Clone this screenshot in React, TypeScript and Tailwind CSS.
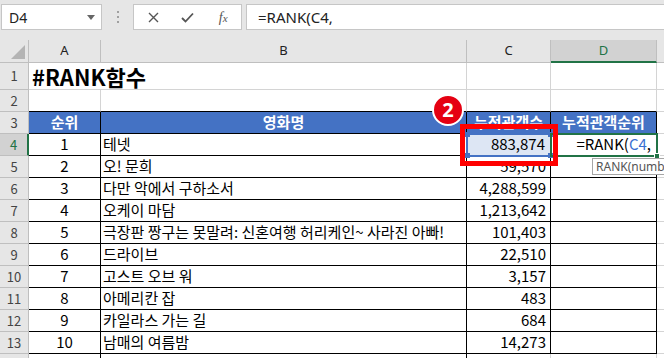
import React from "react"

const KR = "font-['Noto_Sans_CJK_KR','Noto_Sans',sans-serif]"

const movies: [number, string, string][] = [
  [1, "테넷", "883,874"],
  [2, "오! 문희", "59,570"],
  [3, "다만 악에서 구하소서", "4,288,599"],
  [4, "오케이 마담", "1,213,642"],
  [5, "극장판 짱구는 못말려: 신혼여행 허리케인~ 사라진 아빠!", "101,403"],
  [6, "드라이브", "22,510"],
  [7, "고스트 오브 워", "3,157"],
  [8, "아메리칸 잡", "483"],
  [9, "카일라스 가는 길", "684"],
  [10, "남매의 여름밤", "14,273"],
]

function RowHead({ n, active }: { n: string; active?: boolean }) {
  return (
    <div
      className={
        active
          ? "flex items-center justify-center border-b border-b-[#bfbfbf] border-r-2 border-r-[#217346] bg-[#d2d2d2] text-[13px] text-[#217346]"
          : "flex items-center justify-center border-b border-r border-[#bfbfbf] bg-[#e6e6e6] text-[13px] text-[#444]"
      }
    >
      {n}
    </div>
  )
}

function FormulaBar() {
  return (
    <div className="flex h-[40px] items-start pt-[4px]">
      <div className="ml-[1px] flex h-[26px] w-[101px] items-center justify-between border border-[#c6c6c6] bg-white pl-[7px] pr-[6px]">
        <span className="font-['Noto_Sans',sans-serif] text-[14px] text-[#222]">D4</span>
        <svg width="8" height="5" viewBox="0 0 8 5">
          <path d="M0 0h8L4 5z" fill="#666" />
        </svg>
      </div>
      <div className="flex h-[26px] w-[31px] flex-col items-center justify-center gap-[3px]">
        <span className="h-[2px] w-[2px] bg-[#a0a0a0]" />
        <span className="h-[2px] w-[2px] bg-[#a0a0a0]" />
        <span className="h-[2px] w-[2px] bg-[#a0a0a0]" />
      </div>
      <div className="flex h-[26px] w-[109px] items-center border border-[#c6c6c6] bg-white">
        <div className="flex w-[36px] justify-center pl-[4px]">
          <svg width="11" height="11" viewBox="0 0 11 11">
            <path d="M1 1l9 9M10 1l-9 9" stroke="#555" strokeWidth="1.4" />
          </svg>
        </div>
        <div className="flex w-[36px] justify-center">
          <svg width="13" height="11" viewBox="0 0 13 11">
            <path d="M1 6l3.5 3.5L12 1.5" stroke="#555" strokeWidth="1.8" fill="none" />
          </svg>
        </div>
        <div className="flex w-[36px] justify-center">
          <span className="font-['Liberation_Serif',serif] text-[14px] italic text-[#555]">
            f<span className="text-[11px]">x</span>
          </span>
        </div>
      </div>
      <div className="ml-[4px] flex h-[26px] flex-1 items-center border border-r-0 border-[#c6c6c6] bg-white pl-[11px]">
        <span className="font-['Noto_Sans',sans-serif] text-[15px] text-[#222]">=RANK(C4,</span>
      </div>
    </div>
  )
}

export default function App() {
  const cell = "flex items-center border-b border-r text-[15px] text-black"
  return (
    <div className={`relative h-[358px] w-[664px] overflow-hidden bg-[#e6e6e6] ${KR}`}>
      <FormulaBar />
      <div className="grid grid-cols-[29px_72px_366px_84px_106px_7px] grid-rows-[23px_27px_22px_repeat(11,22px)_4px] bg-white">
        {/* column headers */}
        <div className="flex items-end justify-end border-b border-r border-[#bfbfbf] bg-[#e6e6e6] p-[3px]">
          <svg width="14" height="14" viewBox="0 0 14 14">
            <path d="M14 0v14H0z" fill="#b4b4b4" />
          </svg>
        </div>
        {["A", "B", "C"].map((c) => (
          <div
            key={c}
            className="flex items-center justify-center border-b border-r border-[#bfbfbf] bg-[#e6e6e6] font-['Noto_Sans',sans-serif] text-[13px] text-[#222]"
          >
            {c}
          </div>
        ))}
        <div className="flex items-center justify-center border-b-2 border-r border-b-[#217346] border-r-[#bfbfbf] bg-[#d2d2d2] font-['Noto_Sans',sans-serif] text-[13px] text-[#217346]">
          D
        </div>
        <div className="border-b border-[#bfbfbf] bg-[#e6e6e6]" />

        {/* row 1 */}
        <RowHead n="1" />
        <div className="relative z-10 flex items-center overflow-visible border-b border-[#d4d4d4] pl-[3px]">
          <span className="whitespace-nowrap text-[22px] font-bold leading-none text-black">#RANK함수</span>
        </div>
        <div className="border-b border-r border-[#d4d4d4]" />
        <div className="border-b border-r border-[#d4d4d4]" />
        <div className="border-b border-r border-[#d4d4d4]" />
        <div className="border-b border-[#d4d4d4]" />

        {/* row 2 */}
        <RowHead n="2" />
        <div className="border-b border-r border-b-black border-r-[#d4d4d4]" />
        <div className="border-b border-r border-b-black border-r-[#d4d4d4]" />
        <div className="border-b border-r border-b-black border-r-[#d4d4d4]" />
        <div className="border-b border-r border-b-black border-r-[#d4d4d4]" />
        <div className="border-b border-[#d4d4d4]" />

        {/* row 3 header */}
        <RowHead n="3" />
        {["순위", "영화명", "누적관객수", "누적관객순위"].map((h) => (
          <div
            key={h}
            className="flex items-center justify-center border-b border-r border-black bg-[#4472c4] text-[15px] font-bold text-white"
          >
            {h}
          </div>
        ))}
        <div className="border-b border-[#d4d4d4]" />

        {movies.map(([rank, title, count], i) => {
          const r = i + 4
          const active = r === 4
          return (
            <React.Fragment key={r}>
              <RowHead n={String(r)} active={active} />
              <div className={`${cell} justify-center border-black`}>{rank}</div>
              <div className={`${cell} whitespace-nowrap border-black pl-[2px]`}>{title}</div>
              <div
                className={
                  active
                    ? `${cell} justify-end border-black bg-[#dde6f4] pr-[5px]`
                    : `${cell} justify-end border-black pr-[4px]`
                }
              >
                {count}
              </div>
              <div className={`${cell} justify-end border-black pr-[5px]`}>
                {active && (
                  <span>
                    =RANK(<span className="text-[#3a6fd1]">C4</span>,
                  </span>
                )}
              </div>
              <div className="border-b border-[#d4d4d4]" />
            </React.Fragment>
          )
        })}

        {/* row 14 partial */}
        <div className="border-r border-[#bfbfbf] bg-[#e6e6e6]" />
        <div className="border-r border-black" />
        <div className="border-r border-black" />
        <div className="border-r border-[#d4d4d4]" />
        <div className="border-r border-[#d4d4d4]" />
        <div />
      </div>

      {/* C4 reference highlight */}
      <div className="absolute left-[466px] top-[133px] h-[24px] w-[86px] border-2 border-[#4472c4]">
        <span className="absolute -left-[3px] -top-[3px] h-[5px] w-[5px] bg-[#4472c4]" />
        <span className="absolute -right-[3px] -top-[3px] h-[5px] w-[5px] bg-[#4472c4]" />
        <span className="absolute -bottom-[3px] -left-[3px] h-[5px] w-[5px] bg-[#4472c4]" />
        <span className="absolute -bottom-[3px] -right-[3px] h-[5px] w-[5px] bg-[#4472c4]" />
      </div>

      {/* D4 active cell */}
      <div className="absolute left-[550px] top-[133px] h-[24px] w-[108px] border-2 border-[#217346]">
        <span className="absolute -bottom-[4px] -right-[4px] h-[6px] w-[6px] border border-white bg-[#217346]" />
      </div>

      {/* red callout box */}
      <div className="absolute left-[460px] top-[124px] h-[42px] w-[98px] border-[5px] border-[#ff0000]" />

      {/* step badge */}
      <div className="absolute left-[432px] top-[94px] flex h-[32px] w-[32px] items-center justify-center rounded-full border-2 border-white bg-[#e50012] font-['Noto_Sans',sans-serif] text-[20px] font-bold leading-none text-white">
        2
      </div>

      {/* tooltip */}
      <div className="absolute left-[592px] top-[158px] flex h-[17px] w-[80px] items-center overflow-hidden whitespace-nowrap border border-[#a6a6a6] bg-white pl-[3px] font-['Noto_Sans',sans-serif] text-[12px] text-[#555]">
        RANK(numb
      </div>
    </div>
  )
}
